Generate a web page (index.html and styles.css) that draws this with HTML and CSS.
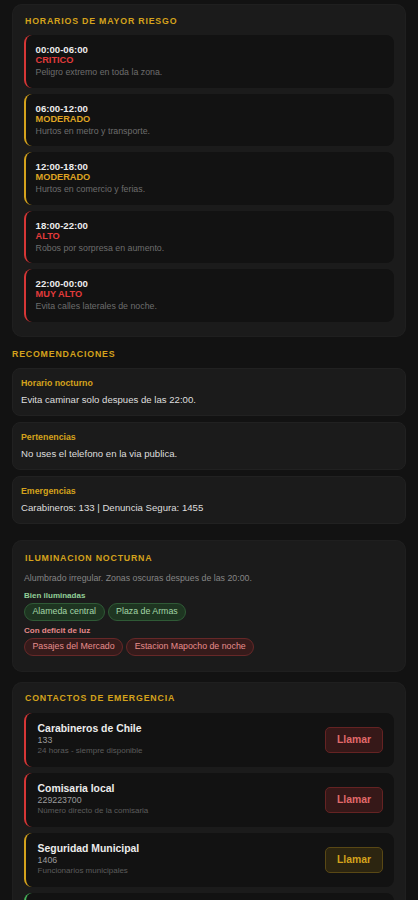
FILE: index.html
```html
<!DOCTYPE html>
<html lang="es">
<head>
<meta charset="utf-8">
<title>Seguridad</title>
<link rel="stylesheet" href="styles.css">
</head>
<body>
<main class="page">
  <section class="card card-hours">
    <h2 class="card-title">HORARIOS DE MAYOR RIESGO</h2>
    <div class="slots">
      <div class="slot slot-red">
        <div class="slot-time">00:00-06:00</div>
        <div class="slot-level level-red">CRITICO</div>
        <div class="slot-desc">Peligro extremo en toda la zona.</div>
      </div>
      <div class="slot slot-gold">
        <div class="slot-time">06:00-12:00</div>
        <div class="slot-level level-gold">MODERADO</div>
        <div class="slot-desc">Hurtos en metro y transporte.</div>
      </div>
      <div class="slot slot-gold">
        <div class="slot-time">12:00-18:00</div>
        <div class="slot-level level-gold">MODERADO</div>
        <div class="slot-desc">Hurtos en comercio y ferias.</div>
      </div>
      <div class="slot slot-red">
        <div class="slot-time">18:00-22:00</div>
        <div class="slot-level level-red">ALTO</div>
        <div class="slot-desc">Robos por sorpresa en aumento.</div>
      </div>
      <div class="slot slot-red">
        <div class="slot-time">22:00-00:00</div>
        <div class="slot-level level-red">MUY ALTO</div>
        <div class="slot-desc">Evita calles laterales de noche.</div>
      </div>
    </div>
  </section>

  <section class="recos">
    <h2 class="section-title">RECOMENDACIONES</h2>
    <div class="reco">
      <div class="reco-label">Horario nocturno</div>
      <div class="reco-text">Evita caminar solo despues de las 22:00.</div>
    </div>
    <div class="reco">
      <div class="reco-label">Pertenencias</div>
      <div class="reco-text">No uses el telefono en la via publica.</div>
    </div>
    <div class="reco">
      <div class="reco-label">Emergencias</div>
      <div class="reco-text">Carabineros: 133 | Denuncia Segura: 1455</div>
    </div>
  </section>

  <section class="card card-light">
    <h2 class="card-title">ILUMINACION NOCTURNA</h2>
    <p class="light-desc">Alumbrado irregular. Zonas oscuras despues de las 20:00.</p>
    <div class="light-label label-green">Bien iluminadas</div>
    <div class="chips">
      <span class="chip chip-green">Alameda central</span>
      <span class="chip chip-green">Plaza de Armas</span>
    </div>
    <div class="light-label label-red">Con deficit de luz</div>
    <div class="chips">
      <span class="chip chip-red">Pasajes del Mercado</span>
      <span class="chip chip-red">Estacion Mapocho de noche</span>
    </div>
  </section>

  <section class="card card-contacts">
    <h2 class="card-title">CONTACTOS DE EMERGENCIA</h2>
    <div class="contacts">
      <div class="contact slot-red">
        <div class="contact-info">
          <div class="contact-name">Carabineros de Chile</div>
          <div class="contact-num">133</div>
          <div class="contact-desc">24 horas - siempre disponible</div>
        </div>
        <button class="call call-red">Llamar</button>
      </div>
      <div class="contact slot-red">
        <div class="contact-info">
          <div class="contact-name">Comisaria local</div>
          <div class="contact-num">229223700</div>
          <div class="contact-desc">Número directo de la comisaria</div>
        </div>
        <button class="call call-red">Llamar</button>
      </div>
      <div class="contact slot-gold">
        <div class="contact-info">
          <div class="contact-name">Seguridad Municipal</div>
          <div class="contact-num">1406</div>
          <div class="contact-desc">Funcionarios municipales</div>
        </div>
        <button class="call call-gold">Llamar</button>
      </div>
      <div class="contact slot-green">
        <div class="contact-info">
          <div class="contact-name">SAMU</div>
          <div class="contact-num">131</div>
          <div class="contact-desc">Emergencias medicas</div>
        </div>
        <button class="call call-green">Llamar</button>
      </div>
    </div>
  </section>
</main>
</body>
</html>
```

FILE: styles.css
```css
* { box-sizing: border-box; }
html, body {
  margin: 0;
  padding: 0;
  background: #121212;
  font-family: "Liberation Sans", Arial, sans-serif;
  color: #e6e6e6;
}
.page {
  padding: 4px 12px 0;
  display: flex;
  flex-direction: column;
}
h2, p { margin: 0; }

.card {
  background: #1b1b1b;
  box-shadow: inset 0 0 0 1px #1f1f1f;
  border-radius: 10px;
  padding: 12px 12px 15px;
}
.card-title {
  font-size: 8.8px;
  line-height: 11px;
  font-weight: 700;
  letter-spacing: 0.8px;
  color: #d4a21c;
  padding-left: 1px;
  margin-bottom: 8px;
}

.slots { display: flex; flex-direction: column; gap: 6px; }
.slot {
  background: #121212;
  border-radius: 8px;
  padding: 9px 12px 9.5px 9.6px;
}
.slot-red { border-left: 2.4px solid #d63636; }
.slot-gold { border-left: 2.4px solid #d4a21c; }
.slot-green { border-left: 2.4px solid #46b35a; }
.slot-time {
  font-size: 9.6px;
  line-height: 11px;
  font-weight: 700;
  color: #ececec;
}
.slot-level {
  font-size: 9.2px;
  line-height: 11px;
  font-weight: 700;
}
.level-red { color: #e23b3b; }
.level-gold { color: #dfa422; }
.slot-desc {
  font-size: 8.8px;
  line-height: 11px;
  margin-top: 1px;
  color: #6d6d6d;
}

.recos {
  display: flex;
  flex-direction: column;
  gap: 6px;
  margin-top: 12px;
}
.section-title {
  font-size: 8.8px;
  line-height: 11px;
  font-weight: 700;
  letter-spacing: 0.8px;
  color: #d4a21c;
  margin-bottom: 2.5px;
}
.reco {
  background: #1b1b1b;
  border: 1px solid #212121;
  border-radius: 8px;
  padding: 9px 8px 9px;
}
.reco-label {
  font-size: 8.8px;
  line-height: 11px;
  font-weight: 700;
  color: #d4a21c;
}
.reco-text {
  font-size: 9.6px;
  line-height: 13px;
  margin-top: 4px;
  color: #dedede;
}

.card-light {
  margin-top: 16px;
  padding: 12.5px 12px 16px;
}
.card-light .card-title { margin-bottom: 9px; }
.light-desc {
  font-size: 8.8px;
  line-height: 11px;
  color: #858585;
  margin-bottom: 7px;
}
.light-label {
  font-size: 8px;
  line-height: 10px;
  font-weight: 700;
  margin-bottom: 2px;
}
.label-green { color: #92cf98; }
.label-red { color: #e58a8a; margin-top: 5px; }
.chips { display: flex; flex-wrap: wrap; gap: 3px; }
.chip {
  font-size: 8.8px;
  line-height: 11px;
  padding: 2.5px 7.5px;
  border-radius: 999px;
  border: 1px solid;
}
.chip-green { background: #1e3521; border-color: #2f5a36; color: #a3d6a7; }
.chip-red { background: #361b1b; border-color: #672828; color: #e78d8d; }

.card-contacts {
  margin-top: 10px;
  padding: 11.5px 12px 12px;
}
.card-contacts .card-title { margin-bottom: 8.5px; }
.contacts { display: flex; flex-direction: column; gap: 6px; }
.contact {
  background: #121212;
  border-radius: 8px;
  display: flex;
  align-items: center;
  justify-content: space-between;
  padding: 10px 11px 10px 11.6px;
}
.contact-name {
  font-size: 10.4px;
  line-height: 12px;
  font-weight: 700;
  color: #ececec;
}
.contact-num {
  font-size: 8.8px;
  line-height: 11.5px;
  color: #9c9c9c;
}
.contact-desc {
  font-size: 8px;
  line-height: 10.5px;
  color: #5c5c5c;
}
.call {
  font-family: inherit;
  font-size: 10.4px;
  line-height: 12px;
  font-weight: 700;
  width: 58px;
  height: 26px;
  border-radius: 5px;
  border: 1px solid;
  padding: 0;
}
.call-red { background: #361818; border-color: #652323; color: #e06a6a; }
.call-gold { background: #2c2510; border-color: #594815; color: #d4a21c; }
.call-green { background: #15301a; border-color: #245a2c; color: #5cc46e; }
```
